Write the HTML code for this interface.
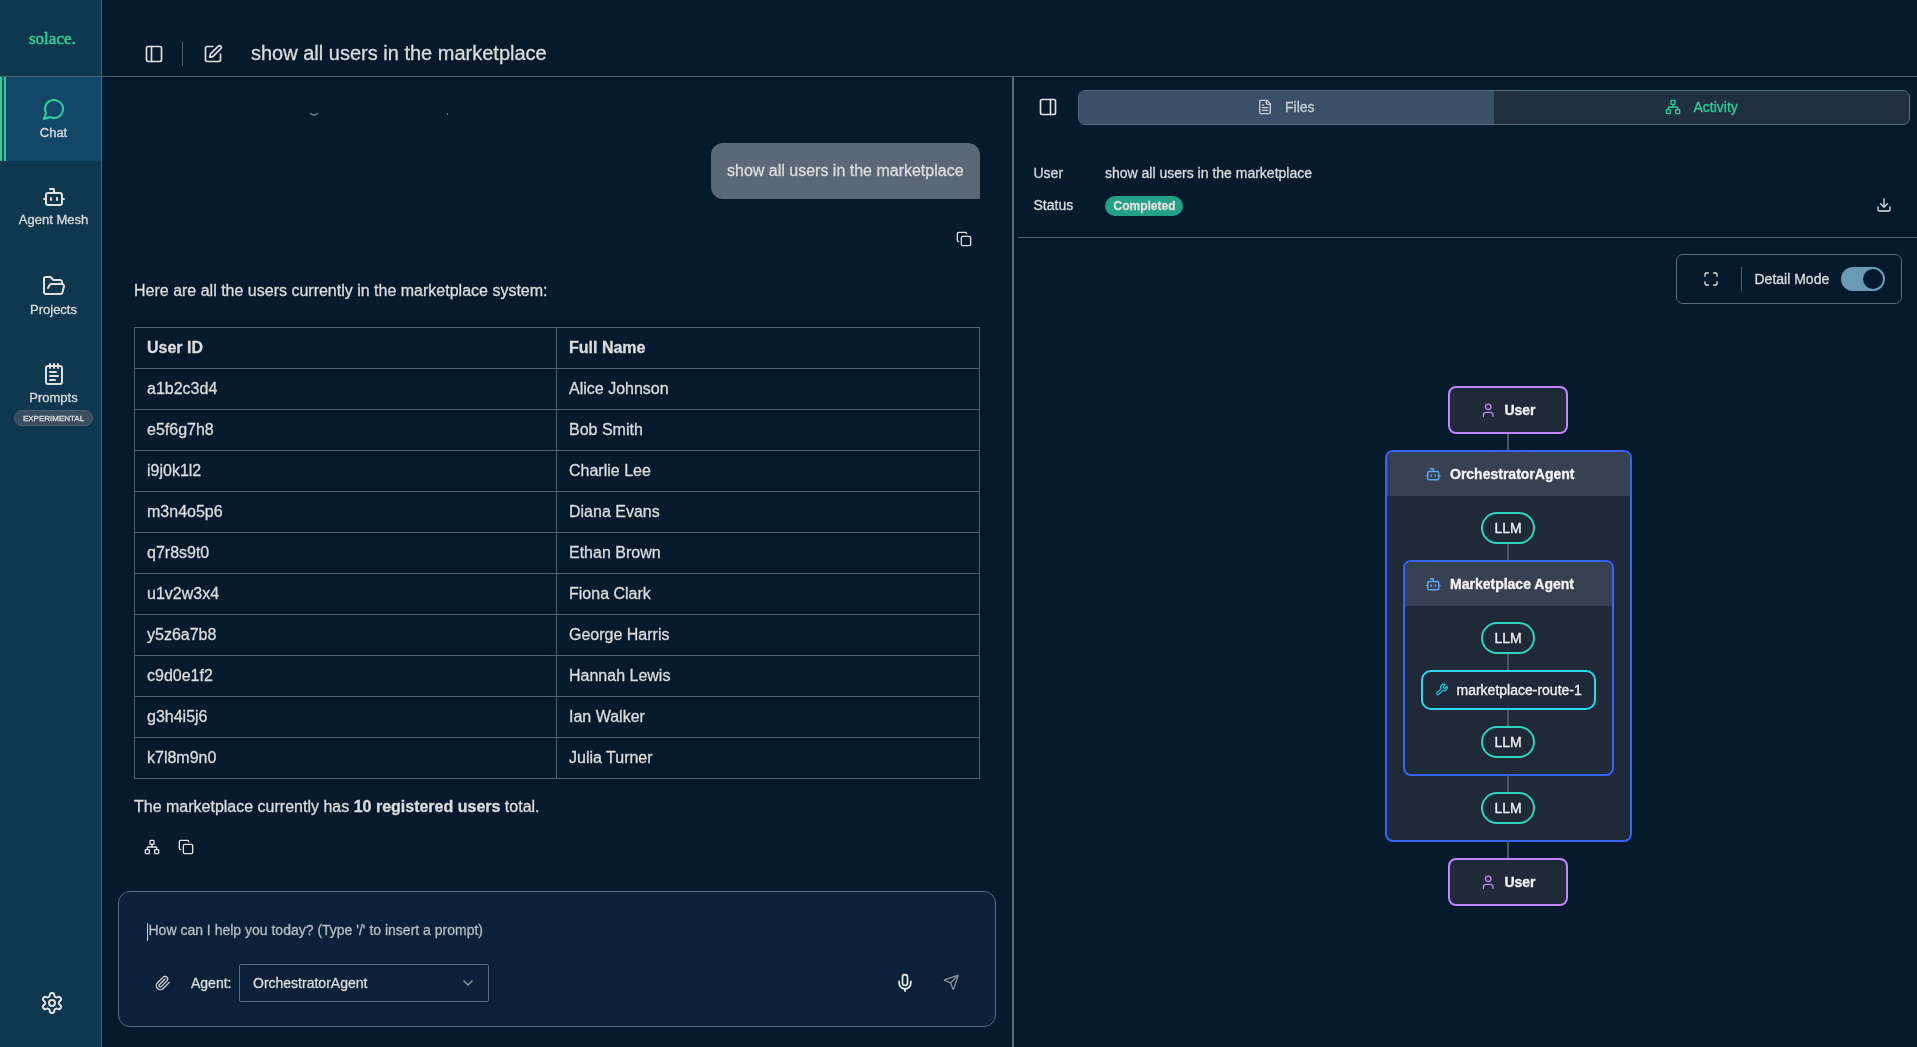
<!DOCTYPE html>
<html><head><meta charset="utf-8">
<style>
*{box-sizing:border-box;margin:0;padding:0}
html,body{width:1917px;height:1047px;overflow:hidden;background:#061a2e;font-family:"Liberation Sans",sans-serif;color:#dcdcdc;-webkit-text-stroke:0.3px currentColor}
.t{position:absolute;white-space:nowrap;line-height:1}
svg.i{position:absolute;overflow:visible;fill:none;stroke-linecap:round;stroke-linejoin:round}
.hl{position:absolute;height:1px;background:#52616f}
.vl{position:absolute;width:1px;background:#52616f}
#sidebar{position:absolute;left:0;top:0;width:101px;height:1047px;background:#0f374f}
.nav{position:absolute;left:0;width:107px;text-align:center;font-size:13px;line-height:1;color:#dcdcdc;white-space:nowrap}
table{position:absolute;left:134px;top:327px;width:845px;border-collapse:collapse;font-size:16px;table-layout:fixed}
td,th{border:1px solid #52616f;height:41px;padding:0 0 0 12px;text-align:left;color:#dcdcdc;font-weight:normal;line-height:1}
th{font-weight:bold}
.box{position:absolute}
.node{position:absolute;background:#1f2937;border-radius:8px}
.llm{position:absolute;left:1481px;width:54px;height:32px;border:2px solid #2dd4bf;border-radius:16px;background:#1f2937;font-size:14px;line-height:28px;text-align:center;color:#f3f4f6}
.conn{position:absolute;left:1507px;width:2px;background:#4b5563}
.dt{position:absolute;white-space:nowrap;line-height:1;font-size:14px;font-weight:bold;color:#f3f4f6}
</style></head><body><div id="root" style="position:absolute;left:0;top:0;width:1917px;height:1047px;will-change:transform">

<!-- SIDEBAR -->
<div id="sidebar"></div>
<div class="vl" style="left:101px;top:0;height:1047px"></div>
<div class="t" style="left:29px;top:29.6px;font-family:'Liberation Serif',serif;font-size:17px;-webkit-text-stroke:0.5px #2fcf98;color:#2fcf98">solace.</div>
<div class="hl" style="left:0;top:76px;width:101px"></div>
<!-- active chat -->
<div class="box" style="left:0;top:77px;width:101px;height:84px;background:#13476a"></div>
<div class="box" style="left:0;top:77px;width:2px;height:84px;background:#2fcf98"></div>
<div class="box" style="left:4px;top:77px;width:2px;height:84px;background:#2fcf98"></div>
<svg class="i" style="left:42px;top:97px" width="24" height="24" viewBox="0 0 24 24" stroke="#2fcf98" stroke-width="2"><path d="M7.9 20A9 9 0 1 0 4 16.1L2 22Z"/></svg>
<div class="nav" style="top:125.5px">Chat</div>
<svg class="i" style="left:41.5px;top:184.5px" width="24" height="24" viewBox="0 0 24 24" stroke="#e2dfdf" stroke-width="2"><path d="M12 8V4H8"/><rect width="16" height="12" x="4" y="8" rx="2"/><path d="M2 14h2"/><path d="M20 14h2"/><path d="M15 13v2"/><path d="M9 13v2"/></svg>
<div class="nav" style="top:213.4px">Agent Mesh</div>
<svg class="i" style="left:41.5px;top:273.8px" width="24" height="24" viewBox="0 0 24 24" stroke="#e2dfdf" stroke-width="2"><path d="m6 14 1.5-2.9A2 2 0 0 1 9.24 10H20a2 2 0 0 1 1.94 2.5l-1.54 6a2 2 0 0 1-1.95 1.5H4a2 2 0 0 1-2-2V5a2 2 0 0 1 2-2h3.9a2 2 0 0 1 1.69.9l.81 1.2a2 2 0 0 0 1.67.9H18a2 2 0 0 1 2 2v2"/></svg>
<div class="nav" style="top:303px">Projects</div>
<svg class="i" style="left:41.6px;top:361.5px" width="24" height="24" viewBox="0 0 24 24" stroke="#e2dfdf" stroke-width="2"><path d="M8 2v4"/><path d="M12 2v4"/><path d="M16 2v4"/><rect width="16" height="18" x="4" y="4" rx="2"/><path d="M8 10h6"/><path d="M8 14h8"/><path d="M8 18h5"/></svg>
<div class="nav" style="top:390.7px">Prompts</div>
<div class="box" style="left:14px;top:410px;width:79px;height:16px;border-radius:8px;background:#3a4e60;border:1px solid #4d6070"></div>
<div class="t" style="left:14px;width:79px;text-align:center;top:414.8px;font-size:8px;font-weight:normal;color:#dcdcdc">EXPERIMENTAL</div>
<svg class="i" style="left:40px;top:990.6px" width="24" height="24" viewBox="0 0 24 24" stroke="#e2dfdf" stroke-width="2"><path d="M12.22 2h-.44a2 2 0 0 0-2 2v.18a2 2 0 0 1-1 1.73l-.43.25a2 2 0 0 1-2 0l-.15-.08a2 2 0 0 0-2.730.73l-.22.38a2 2 0 0 0 .73 2.73l.15.1a2 2 0 0 1 1 1.72v.51a2 2 0 0 1-1 1.74l-.15.09a2 2 0 0 0-.73 2.73l.22.38a2 2 0 0 0 2.73.73l.15-.08a2 2 0 0 1 2 0l.43.25a2 2 0 0 1 1 1.73V20a2 2 0 0 0 2 2h.44a2 2 0 0 0 2-2v-.18a2 2 0 0 1 1-1.73l.43-.25a2 2 0 0 1 2 0l.15.08a2 2 0 0 0 2.73-.73l.22-.39a2 2 0 0 0-.73-2.73l-.15-.08a2 2 0 0 1-1-1.74v-.5a2 2 0 0 1 1-1.74l.15-.09a2 2 0 0 0 .73-2.73l-.22-.38a2 2 0 0 0-2.73-.73l-.15.08a2 2 0 0 1-2 0l-.43-.25a2 2 0 0 1-1-1.73V4a2 2 0 0 0-2-2z"/><circle cx="12" cy="12" r="3"/></svg>

<!-- HEADER -->
<div class="hl" style="left:102px;top:76px;width:1815px"></div>
<svg class="i" style="left:144.3px;top:44.3px" width="20" height="20" viewBox="0 0 24 24" stroke="#e2dfdf" stroke-width="2"><rect width="18" height="18" x="3" y="3" rx="2"/><path d="M9 3v18"/></svg>
<div class="vl" style="left:182px;top:42px;height:24px"></div>
<svg class="i" style="left:203px;top:44.3px" width="20" height="20" viewBox="0 0 24 24" stroke="#e2dfdf" stroke-width="2"><path d="M12 3H5a2 2 0 0 0-2 2v14a2 2 0 0 0 2 2h14a2 2 0 0 0 2-2v-7"/><path d="M18.375 2.625a1 1 0 0 1 3 3l-9.013 9.014a2 2 0 0 1-.853.505l-2.873.84a.5.5 0 0 1-.62-.62l.84-2.873a2 2 0 0 1 .506-.852z"/></svg>
<div class="t" style="left:251px;top:42.9px;font-size:20px;color:#dcdcdc">show all users in the marketplace</div>

<!-- clipped remnants -->
<svg class="i" style="left:309px;top:111px" width="10" height="6" viewBox="0 0 10 6" stroke="#7d8a96" stroke-width="1.3"><path d="M1.5 2.5Q5 5.5 8.5 2.5"/></svg>
<div class="box" style="left:446.5px;top:113px;width:1.5px;height:2px;background:#6f7c88"></div>
<!-- CHAT -->
<div class="box" style="left:711px;top:143px;width:269px;height:56px;background:#5a6878;border-radius:12px 12px 0 12px"></div>
<div class="t" style="left:727px;top:163px;font-size:16px;color:#dcdcdc">show all users in the marketplace</div>
<svg class="i" style="left:956px;top:231px" width="16" height="16" viewBox="0 0 24 24" stroke="#e2dfdf" stroke-width="2"><rect width="14" height="14" x="8" y="8" rx="2" ry="2"/><path d="M4 16c-1.1 0-2-.9-2-2V4c0-1.1.9-2 2-2h10c1.1 0 2 .9 2 2"/></svg>
<div class="t" style="left:134px;top:282.8px;font-size:16px">Here are all the users currently in the marketplace system:</div>
<table>
<colgroup><col style="width:422px"><col style="width:423px"></colgroup>
<tr><th>User ID</th><th>Full Name</th></tr>
<tr><td>a1b2c3d4</td><td>Alice Johnson</td></tr>
<tr><td>e5f6g7h8</td><td>Bob Smith</td></tr>
<tr><td>i9j0k1l2</td><td>Charlie Lee</td></tr>
<tr><td>m3n4o5p6</td><td>Diana Evans</td></tr>
<tr><td>q7r8s9t0</td><td>Ethan Brown</td></tr>
<tr><td>u1v2w3x4</td><td>Fiona Clark</td></tr>
<tr><td>y5z6a7b8</td><td>George Harris</td></tr>
<tr><td>c9d0e1f2</td><td>Hannah Lewis</td></tr>
<tr><td>g3h4i5j6</td><td>Ian Walker</td></tr>
<tr><td>k7l8m9n0</td><td>Julia Turner</td></tr>
</table>
<div class="t" style="left:134px;top:799px;font-size:16px">The marketplace currently has <b>10 registered users</b> total.</div>
<svg class="i" style="left:143.6px;top:839px" width="16" height="16" viewBox="0 0 24 24" stroke="#e2dfdf" stroke-width="2"><rect x="16" y="16" width="6" height="6" rx="1"/><rect x="2" y="16" width="6" height="6" rx="1"/><rect x="9" y="2" width="6" height="6" rx="1"/><path d="M5 16v-3a1 1 0 0 1 1-1h12a1 1 0 0 1 1 1v3"/><path d="M12 12V8"/></svg>
<svg class="i" style="left:177.6px;top:839px" width="16" height="16" viewBox="0 0 24 24" stroke="#e2dfdf" stroke-width="2"><rect width="14" height="14" x="8" y="8" rx="2" ry="2"/><path d="M4 16c-1.1 0-2-.9-2-2V4c0-1.1.9-2 2-2h10c1.1 0 2 .9 2 2"/></svg>

<!-- INPUT -->
<div class="box" style="left:118px;top:891px;width:878px;height:136px;border:1px solid #5b6b7b;border-radius:12px;background:#0a2139"></div>
<div class="box" style="left:147px;top:923px;width:1px;height:18px;background:#d0d0d0"></div>
<div class="t" style="left:148.5px;top:922.5px;font-size:14px;color:#b5bcc4">How can I help you today? (Type '/' to insert a prompt)</div>
<svg class="i" style="left:154.9px;top:974.9px" width="16" height="16" viewBox="0 0 24 24" stroke="#d5d5d5" stroke-width="2"><path d="m21.44 11.05-9.19 9.19a6 6 0 0 1-8.49-8.49l8.57-8.57A4 4 0 1 1 18 8.84l-8.59 8.57a2 2 0 0 1-2.83-2.83l8.49-8.48"/></svg>
<div class="t" style="left:191px;top:975.7px;font-size:14px">Agent:</div>
<div class="box" style="left:239px;top:964px;width:250px;height:38px;border:1px solid #5b6b7b;border-radius:2px"></div>
<div class="t" style="left:253px;top:975.7px;font-size:14px">OrchestratorAgent</div>
<svg class="i" style="left:460px;top:975.3px" width="16" height="16" viewBox="0 0 24 24" stroke="#8f9aa4" stroke-width="2"><path d="m6 9 6 6 6-6"/></svg>
<svg class="i" style="left:894.6px;top:972.8px" width="20" height="20" viewBox="0 0 24 24" stroke="#f0f0f0" stroke-width="2"><path d="M12 2a3 3 0 0 0-3 3v7a3 3 0 0 0 6 0V5a3 3 0 0 0-3-3Z"/><path d="M19 10v2a7 7 0 0 1-14 0v-2"/><line x1="12" x2="12" y1="19" y2="22"/></svg>
<svg class="i" style="left:942.7px;top:973.8px" width="16.5" height="16.5" viewBox="0 0 24 24" stroke="#8a949e" stroke-width="1.8"><path d="M14.536 21.686a.5.5 0 0 0 .937-.024l6.5-19a.496.496 0 0 0-.635-.635l-19 6.5a.5.5 0 0 0-.024.937l7.93 3.18a2 2 0 0 1 1.112 1.11z"/><path d="m21.854 2.147-10.94 10.939"/></svg>

<!-- RIGHT PANEL -->
<div class="box" style="left:1012px;top:77px;width:2px;height:970px;background:#5a6b7c"></div>
<svg class="i" style="left:1038.3px;top:96.7px" width="20" height="20" viewBox="0 0 24 24" stroke="#e2dfdf" stroke-width="2"><rect width="18" height="18" x="3" y="3" rx="2"/><path d="M15 3v18"/></svg>
<div class="box" style="left:1078px;top:90px;width:832px;height:35px;border:1px solid #5b6b7b;border-radius:7px;background:#1f2f40;overflow:hidden"><div style="position:absolute;left:0;top:0;width:415px;height:33px;background:#3a5068"></div></div>
<svg class="i" style="left:1257px;top:99px" width="16" height="16" viewBox="0 0 24 24" stroke="#c5ccd3" stroke-width="2"><path d="M15 2H6a2 2 0 0 0-2 2v16a2 2 0 0 0 2 2h12a2 2 0 0 0 2-2V7Z"/><path d="M14 2v4a2 2 0 0 0 2 2h4"/><path d="M10 9H8"/><path d="M16 13H8"/><path d="M16 17H8"/></svg>
<div class="t" style="left:1285px;top:100px;font-size:14px;color:#c5ccd3">Files</div>
<svg class="i" style="left:1665px;top:99px" width="16" height="16" viewBox="0 0 24 24" stroke="#2fcf98" stroke-width="2"><rect x="16" y="16" width="6" height="6" rx="1"/><rect x="2" y="16" width="6" height="6" rx="1"/><rect x="9" y="2" width="6" height="6" rx="1"/><path d="M5 16v-3a1 1 0 0 1 1-1h12a1 1 0 0 1 1 1v3"/><path d="M12 12V8"/></svg>
<div class="t" style="left:1693.5px;top:100px;font-size:14px;color:#2fcf98">Activity</div>
<div class="t" style="left:1033.5px;top:165.6px;font-size:14px">User</div>
<div class="t" style="left:1105px;top:165.6px;font-size:14px">show all users in the marketplace</div>
<div class="t" style="left:1033.5px;top:197.9px;font-size:14px">Status</div>
<div class="box" style="left:1105px;top:196px;width:78px;height:20px;border-radius:10px;background:#23a085"></div>
<div class="t" style="left:1113.5px;top:200px;font-size:12px;font-weight:bold;color:#e3dfdf">Completed</div>
<svg class="i" style="left:1875.7px;top:196.7px" width="16" height="16" viewBox="0 0 24 24" stroke="#e2dfdf" stroke-width="2"><path d="M21 15v4a2 2 0 0 1-2 2H5a2 2 0 0 1-2-2v-4"/><polyline points="7 10 12 15 17 10"/><line x1="12" x2="12" y1="15" y2="3"/></svg>
<div class="hl" style="left:1018px;top:237px;width:899px"></div>

<!-- detail mode box -->
<div class="box" style="left:1676px;top:254px;width:226px;height:50px;border:1px solid #5b6b7b;border-radius:7px"></div>
<svg class="i" style="left:1703px;top:271px" width="16" height="16" viewBox="0 0 24 24" stroke="#e2dfdf" stroke-width="2"><path d="M8 3H5a2 2 0 0 0-2 2v3"/><path d="M21 8V5a2 2 0 0 0-2-2h-3"/><path d="M3 16v3a2 2 0 0 0 2 2h3"/><path d="M16 21h3a2 2 0 0 0 2-2v-3"/></svg>
<div class="vl" style="left:1741px;top:267px;height:24px"></div>
<div class="t" style="left:1754.5px;top:271.7px;font-size:14px">Detail Mode</div>
<div class="box" style="left:1841px;top:267px;width:44px;height:24px;border-radius:12px;background:#6b9bb4"></div>
<div class="box" style="left:1863px;top:269px;width:20px;height:20px;border-radius:10px;background:#061a2e"></div>

<!-- DIAGRAM -->
<div class="conn" style="top:433px;height:19px"></div>
<div class="node" style="left:1448px;top:386px;width:120px;height:48px;border:2px solid #c084fc"></div>
<svg class="i" style="left:1480.2px;top:401.8px" width="16.5" height="16.5" viewBox="0 0 24 24" stroke="#c084fc" stroke-width="2"><path d="M19 21v-2a4 4 0 0 0-4-4H9a4 4 0 0 0-4 4v2"/><circle cx="12" cy="7" r="4"/></svg>
<div class="dt" style="left:1504.4px;top:403.2px">User</div>

<div class="node" style="left:1385px;top:450px;width:247px;height:392px;border:2px solid #3464fa;overflow:hidden"><div style="position:absolute;left:0;top:0;width:100%;height:44px;background:#374151"></div></div>
<svg class="i" style="left:1425.3px;top:466.2px" width="16.5" height="16.5" viewBox="0 0 24 24" stroke="#60a5fa" stroke-width="2"><path d="M12 8V4H8"/><rect width="16" height="12" x="4" y="8" rx="2"/><path d="M2 14h2"/><path d="M20 14h2"/><path d="M15 13v2"/><path d="M9 13v2"/></svg>
<div class="dt" style="left:1450px;top:466.5px">OrchestratorAgent</div>
<div class="conn" style="top:543px;height:18px"></div>
<div class="llm" style="top:512px">LLM</div>

<div class="node" style="left:1403px;top:560px;width:211px;height:216px;border:2px solid #3464fa;overflow:hidden"><div style="position:absolute;left:0;top:0;width:100%;height:44px;background:#374151"></div></div>
<svg class="i" style="left:1425.3px;top:576.4px" width="16.5" height="16.5" viewBox="0 0 24 24" stroke="#60a5fa" stroke-width="2"><path d="M12 8V4H8"/><rect width="16" height="12" x="4" y="8" rx="2"/><path d="M2 14h2"/><path d="M20 14h2"/><path d="M15 13v2"/><path d="M9 13v2"/></svg>
<div class="dt" style="left:1450px;top:576.5px">Marketplace Agent</div>
<div class="conn" style="top:653px;height:18px"></div>
<div class="llm" style="top:622px">LLM</div>
<div class="conn" style="top:709px;height:18px"></div>
<div class="node" style="left:1420.5px;top:670px;width:175px;height:40px;border:2px solid #30d5f0;border-radius:10px"></div>
<svg class="i" style="left:1435.1px;top:683.1px" width="13.5" height="13.5" viewBox="0 0 24 24" stroke="#22d3ee" stroke-width="2"><path d="M14.7 6.3a1 1 0 0 0 0 1.4l1.6 1.6a1 1 0 0 0 1.4 0l3.77-3.77a6 6 0 0 1-7.94 7.94l-6.91 6.91a2.12 2.12 0 0 1-3-3l6.91-6.91a6 6 0 0 1 7.94-7.94l-3.76 3.76z"/></svg>
<div class="t" style="left:1456.5px;top:683px;font-size:14px;color:#f3f4f6">marketplace-route-1</div>
<div class="llm" style="top:726px">LLM</div>
<div class="conn" style="top:775px;height:18px"></div>
<div class="llm" style="top:792px">LLM</div>
<div class="conn" style="top:841px;height:18px"></div>
<div class="node" style="left:1448px;top:858px;width:120px;height:48px;border:2px solid #c084fc"></div>
<svg class="i" style="left:1480.2px;top:873.8px" width="16.5" height="16.5" viewBox="0 0 24 24" stroke="#c084fc" stroke-width="2"><path d="M19 21v-2a4 4 0 0 0-4-4H9a4 4 0 0 0-4 4v2"/><circle cx="12" cy="7" r="4"/></svg>
<div class="dt" style="left:1504.4px;top:875.2px">User</div>

</div></body></html>
